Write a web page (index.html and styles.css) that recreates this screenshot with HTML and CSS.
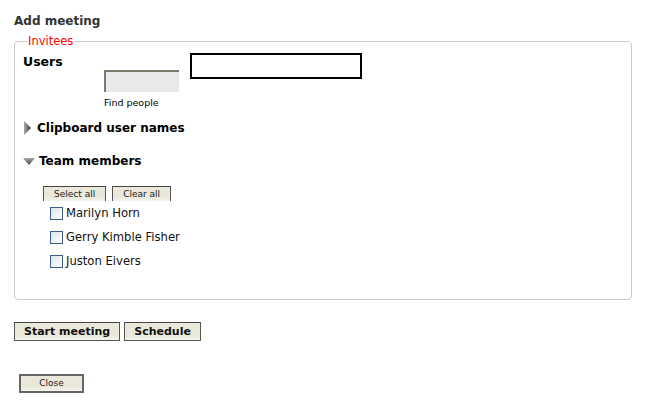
FILE: index.html
```html
<!DOCTYPE html>
<html>
<head>
<meta charset="utf-8">
<link rel="stylesheet" href="styles.css">
</head>
<body>
<div class="page">
  <h1 class="title">Add meeting</h1>
  <fieldset class="invitees">
    <legend class="legend">Invitees</legend>
    <div class="users-row">
      <div class="users-label">Users</div>
      <div class="find-col">
        <div class="find-box"></div>
        <div class="find-text">Find people</div>
      </div>
      <input class="user-input" type="text">
    </div>
    <div class="section-head clip">
      <svg class="tri-right" width="7" height="14" viewBox="0 0 7 14"><defs><linearGradient id="g1" x1="0" y1="0" x2="1" y2="0"><stop offset="0" stop-color="#aaa"/><stop offset="1" stop-color="#333"/></linearGradient></defs><polygon points="0,0 7,7 0,14" fill="url(#g1)"/></svg>
      <span>Clipboard user names</span>
    </div>
    <div class="section-head team">
      <svg class="tri-down" width="12" height="7" viewBox="0 0 12 7"><defs><linearGradient id="g2" x1="0" y1="0" x2="0" y2="1"><stop offset="0" stop-color="#aaa"/><stop offset="1" stop-color="#444"/></linearGradient></defs><polygon points="0,0 12,0 6,7" fill="url(#g2)"/></svg>
      <span>Team members</span>
    </div>
    <div class="sel-buttons">
      <button class="btn small">Select all</button>
      <button class="btn small">Clear all</button>
    </div>
    <ul class="members">
      <li class="member"><span class="cb"></span>Marilyn Horn</li>
      <li class="member"><span class="cb"></span>Gerry Kimble Fisher</li>
      <li class="member"><span class="cb"></span>Juston Eivers</li>
    </ul>
  </fieldset>
  <div class="actions">
    <button class="btn big">Start meeting</button>
    <button class="btn big">Schedule</button>
  </div>
  <div class="close-row">
    <button class="btn close">Close</button>
  </div>
</div>
</body>
</html>
```

FILE: styles.css
```css
* { box-sizing: border-box; }
body {
  margin: 0;
  font-family: "DejaVu Sans", Verdana, sans-serif;
  color: #000;
  background: #fff;
}
.page {
  padding: 14px 20px 0 14px;
}
.title {
  margin: 0;
  font-size: 12px;
  font-weight: bold;
  color: #333;
  line-height: 14px;
}
.invitees {
  margin: 6px 0 0 0;
  width: 618px;
  height: 266px;
  border: 1px solid #ccc;
  border-radius: 4px;
  padding: 0 8px 0 8px;
}
.legend {
  color: #ff0000;
  font-size: 11.5px;
  padding: 0 1px;
  margin-left: 4px;
  line-height: 14px;
}
.users-row {
  display: flex;
  align-items: flex-start;
  margin-top: 6px;
}
.users-label {
  width: 81px;
  font-weight: bold;
  font-size: 12.5px;
}
.find-col {
  display: flex;
  flex-direction: column;
  margin-top: 16px;
}
.find-box {
  width: 75px;
  height: 22px;
  background: #e9e9e9;
  border-top: 2px solid #7e7a6c;
  border-left: 2px solid #7e7a6c;
}
.find-text {
  font-size: 9.5px;
  margin-top: 5px;
}
.user-input {
  margin: -1px 0 0 11px;
  width: 172px;
  height: 26px;
  border: 2px solid #000;
  padding: 0;
  background: #fff;
}
.section-head {
  display: flex;
  align-items: center;
  font-weight: bold;
  font-size: 12px;
}
.clip {
  margin-top: 13px;
  gap: 6px;
  margin-left: 1px;
}
.team {
  margin-top: 19px;
  gap: 4px;
}
.sel-buttons {
  display: flex;
  gap: 6px;
  margin: 18px 0 0 20px;
}
.btn {
  font-family: "DejaVu Sans", Verdana, sans-serif;
  background: linear-gradient(#e9e8da 0, #e9e8da 70%, #f4f4ee 100%);
  border: 1px solid #555;
  border-top-color: #444;
  color: #222;
  padding: 0;
}
.small {
  height: 15px;
  font-size: 9px;
  border-bottom: none;
  padding: 0 10px;
  line-height: 13px;
}
.members {
  list-style: none;
  margin: 0 0 0 27px;
  padding: 0;
}
.member {
  display: flex;
  align-items: center;
  height: 24px;
  font-size: 11.6px;
  color: #111;
}
.cb {
  width: 13px;
  height: 13px;
  border: 1px solid #3c5d86;
  background: linear-gradient(135deg, #dfe2e8, #fff);
  margin-right: 3px;
}
.actions {
  display: flex;
  gap: 4px;
  margin-top: 22px;
}
.big {
  height: 19px;
  font-size: 11px;
  font-weight: bold;
  padding: 0 9px;
  color: #111;
}
.close-row {
  margin: 30px 0 0 5px;
}
.close {
  width: 65px;
  height: 19px;
  font-size: 9px;
  border: 2px solid #666;
}
```
